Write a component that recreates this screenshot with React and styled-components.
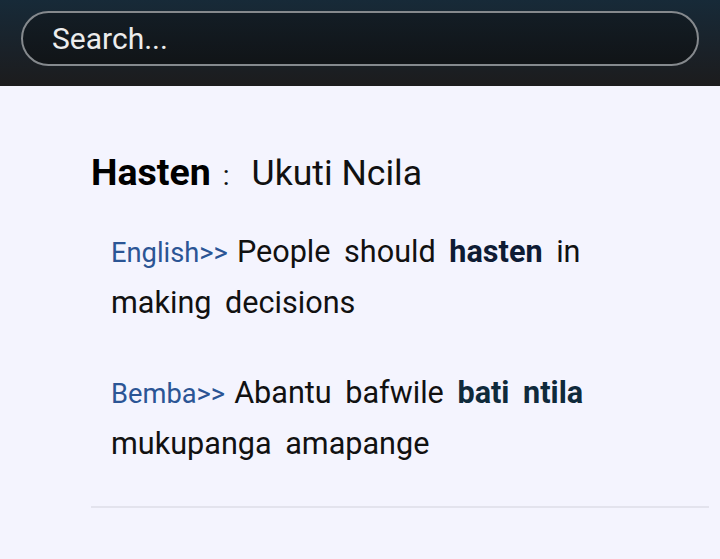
import React from "react";
import styled, { createGlobalStyle } from "styled-components";

const Global = createGlobalStyle`
  html, body { margin: 0; padding: 0; background: #f4f4fe; }
  body { font-family: Roboto, "Noto Sans", sans-serif; }
`;

const Header = styled.header`
  height: 86px;
  box-sizing: border-box;
  padding: 11px 21px 0 21px;
  background: linear-gradient(180deg, #172a38 0%, #1a2128 60%, #1c1c1d 100%);
`;

const SearchBox = styled.div`
  height: 55px;
  box-sizing: border-box;
  border: 2px solid #85898d;
  border-radius: 28px;
  background: linear-gradient(180deg, #131d25 0%, #111417 100%);
  display: flex;
  align-items: center;
  padding-left: 29px;
`;

const SearchInput = styled.input`
  flex: 1;
  background: transparent;
  border: none;
  outline: none;
  color: #ececec;
  font-family: Roboto, sans-serif;
  font-size: 30px;
  padding: 0;
  &::placeholder { color: #ececec; opacity: 1; }
`;

const Main = styled.main`
  padding: 61px 11px 0 91px;
`;

const Title = styled.h1`
  margin: 0;
  font-weight: 400;
  font-size: 35.6px;
  line-height: 50px;
  color: #111;
  display: flex;
  align-items: baseline;
`;

const Word = styled.span`
  font-weight: 700;
  font-size: 37.5px;
  color: #000;
`;

const Colon = styled.span`
  margin: 0 22px 0 12px;
  font-size: 28px;
`;

const Example = styled.p`
  margin: ${(p) => p.$top}px 0 0 20px;
  padding-right: 100px;
  font-size: 30.6px;
  line-height: 50px;
  color: #111;
  word-spacing: 6px;
`;

const Lang = styled.span`
  color: #2b5595;
  font-size: 27.3px;
  word-spacing: 0;
  margin-right: 9px;
`;

const Strong = styled.b`
  color: ${(p) => p.$color};
  font-weight: 700;
`;

const Divider = styled.hr`
  margin: 37px 0 0 0;
  border: none;
  border-top: 2px solid #e3e3ed;
`;

export default function App() {
  return (
    <>
      <Global />
      <Header>
        <SearchBox>
          <SearchInput placeholder="Search..." />
        </SearchBox>
      </Header>
      <Main>
        <Title>
          <Word>Hasten</Word>
          <Colon>:</Colon>
          Ukuti Ncila
        </Title>
        <Example $top={26}>
          <Lang>English&gt;&gt;</Lang>People should{" "}
          <Strong $color="#0e1b34">hasten</Strong> in making decisions
        </Example>
        <Example $top={40}>
          <Lang>Bemba&gt;&gt;</Lang>Abantu bafwile{" "}
          <Strong $color="#0f2a3b">bati ntila</Strong> mukupanga amapange
        </Example>
        <Divider />
      </Main>
    </>
  );
}
